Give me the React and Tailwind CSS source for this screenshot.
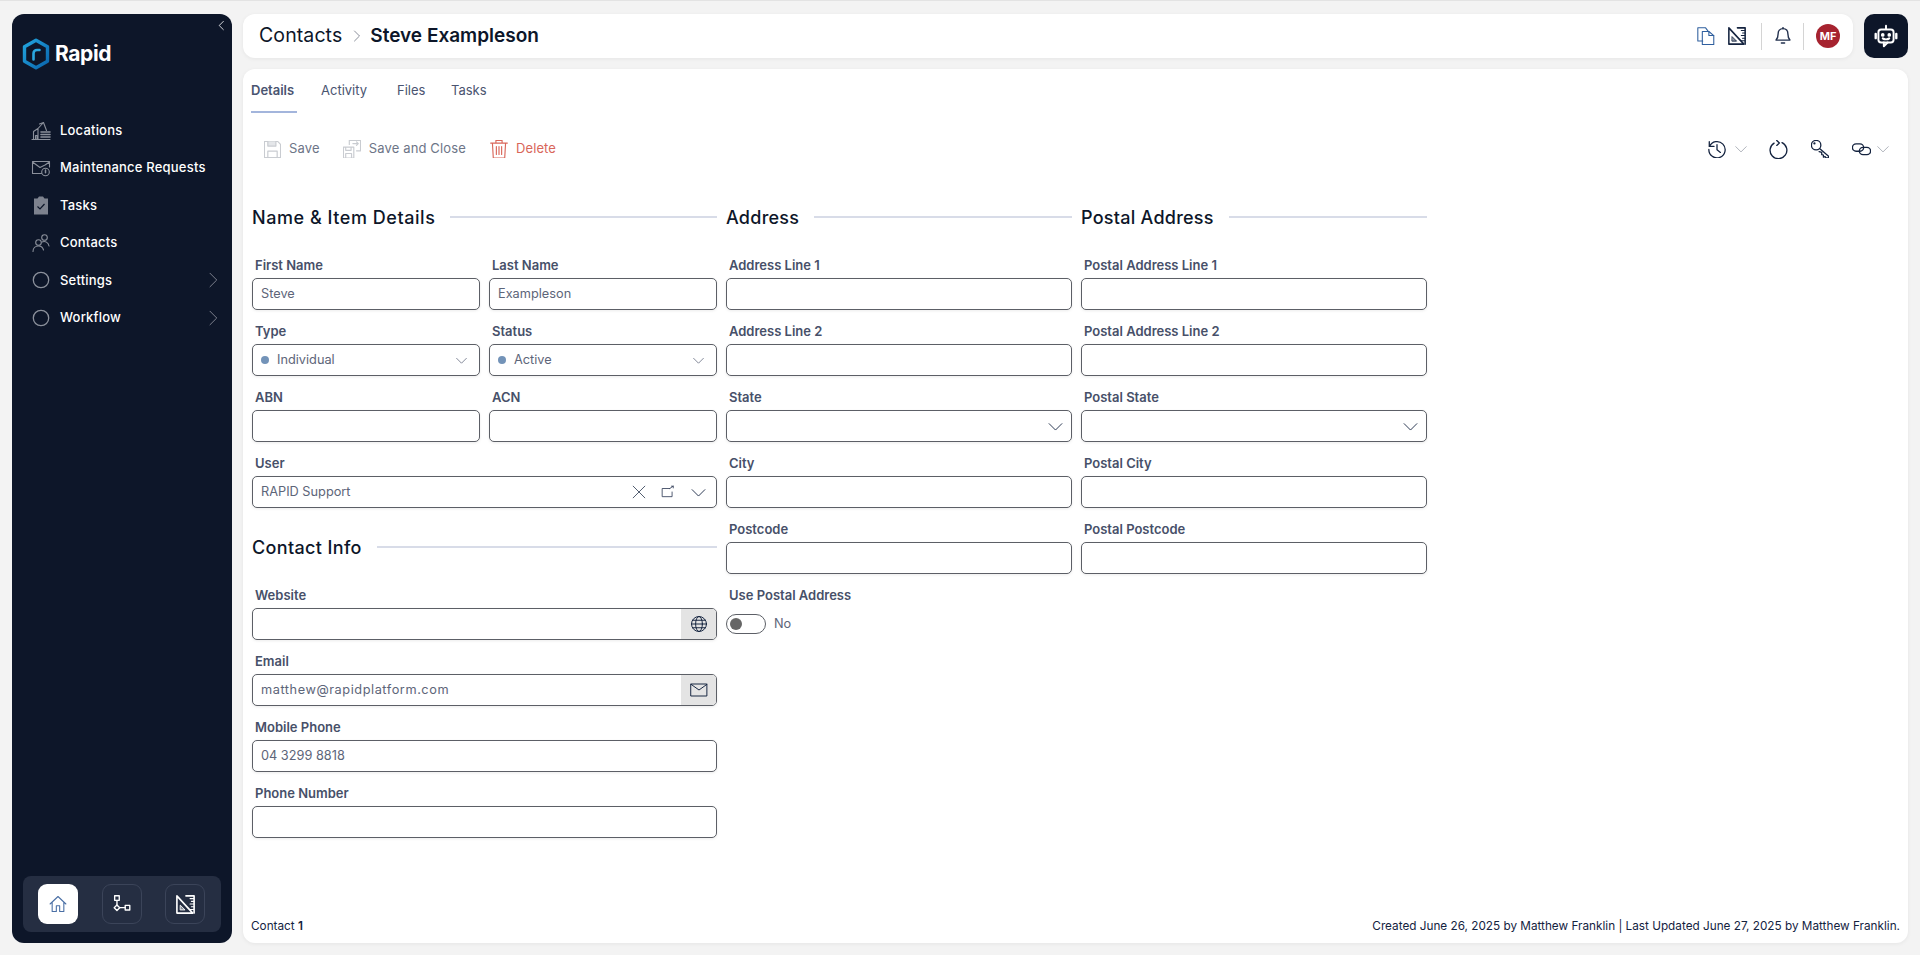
import React from "react";

const S = ({ size = 18, className = "", vb = "0 0 24 24", sw = 1.5, children }) => (
  <svg width={size} height={size} viewBox={vb} fill="none" stroke="currentColor" strokeWidth={sw} strokeLinecap="round" strokeLinejoin="round" className={`shrink-0 ${className}`}>{children}</svg>
);
const ChevD = ({ size = 14, className = "" }) => <S size={size} className={className} sw={1.4}><path d="M3 8l9 9 9-9" /></S>;
const ChevR = ({ className = "" }) => <S size={18} className={className} sw={1.3}><path d="M8 3l9 9-9 9" /></S>;

const SetSquare = ({ size = 20, className = "" }) => (
  <S size={size} className={className} sw={1.8} vb="1.5 1.5 21 21">
    <path d="M2.5 2.5L20 21.5H2.5Z" />
    <path d="M6.5 13L11.5 18H6.5Z" fill="currentColor" fillOpacity=".45" strokeWidth={1} />
    <path d="M12.5 2.5H21.5V21.5" />
    <path d="M17 5.5h4M18.5 8.5h3M17 11.5h4M18.5 14.5h3M17 17.5h4" strokeWidth={1.2} />
  </S>
);

const Logo = () => (
  <svg width="28" height="32" viewBox="0 0 28 32" fill="none">
    <defs>
      <linearGradient id="lg" x1="0" y1="0" x2="1" y2="1">
        <stop offset="0" stopColor="#22a5de" />
        <stop offset="1" stopColor="#0a65ad" />
      </linearGradient>
    </defs>
    <path d="M14 2.2L25.5 8.8V23.2L14 29.8L2.5 23.2V8.8Z" stroke="url(#lg)" strokeWidth="3.4" strokeLinejoin="round" />
    <path d="M11.5 21.5V15.5C11.5 13.5 13 12 15 12H17.5" stroke="#2aa8e0" strokeWidth="2.6" strokeLinecap="round" />
  </svg>
);

const navIcons = {
  building: (
    <S size={20} sw={1.1} vb="0 0 20 20">
      <path d="M1 18.5h18M2.5 18.5V10.5L7 7.5V18.5M4.5 18.5v-4h1.5v4M7 7.5L12.5 1.5 15.5 9.5M12.5 1.5l-4 1.500" />
      <path d="M10 11h9M10 13.5h9M10 16h9" strokeWidth={1.6} />
    </S>
  ),
  mail: (
    <S size={20} sw={1.1} vb="0 0 20 20">
      <path d="M10.5 15.5H1.5V3.5H18.5V9M1.5 4l7.5 5.5L14 7l4.500-3" />
      <circle cx="14.5" cy="14" r="3.8" />
      <path d="M14.5 12v2.8" strokeWidth={1.5} />
    </S>
  ),
  tasks: (
    <svg width="20" height="20" viewBox="0 0 20 20">
      <path d="M3 3.500h3.500L8 1.500h4l1.500 2H17V19.500H3Z" fill="#7d828e" />
      <path d="M6.500 11.500l2.500 2.500 4.500-5" stroke="#0d1629" strokeWidth="1.2" fill="none" />
    </svg>
  ),
  users: (
    <S size={20} sw={1.1} vb="0 0 20 20">
      <circle cx="7.5" cy="9.5" r="2.8" />
      <path d="M2 18.500c0-3.500 2.500-5.500 5.500-5.500s4.500 2 5 4" />
      <circle cx="13.5" cy="4.5" r="2.8" />
      <path d="M11 9c3-1.500 6.500.5 7 4" />
    </S>
  ),
  circle: (
    <svg width="18" height="18" viewBox="0 0 18 18" fill="none"><circle cx="9" cy="9" r="7.7" stroke="#8b909b" strokeWidth="1.3" /></svg>
  ),
};

function NavItem({ icon, label, chevron }) {
  return (
    <div className="h-[37.4px] flex items-center pl-[18.5px] pr-[10px] text-[#ffffff]">
      <span className="w-[20px] flex justify-center text-[#8b909b]">{navIcons[icon]}</span>
      <span className="ml-[9.5px] flex-1 text-[13px] font-medium tracking-[0.2px]">{label}</span>
      {chevron && <ChevR className="text-[#7d828e]" />}
    </div>
  );
}

function Sidebar() {
  return (
    <aside className="w-[220px] shrink-0 bg-[#0d1629] rounded-[12px] flex flex-col relative">
      <span className="absolute right-[5px] top-[6px] text-[#e5e7eb]"><S size={11} sw={2}><path d="M16 3l-9 9 9 9" /></S></span>
      <div className="pl-[10px] pt-[13px] flex items-center gap-[5px] h-[66px]">
        <Logo />
        <span className="text-[21px] font-bold text-white leading-none tracking-[-0.4px]">Rapid</span>
      </div>
      <nav className="mt-[32px] flex flex-col">
        <NavItem icon="building" label="Locations" />
        <NavItem icon="mail" label="Maintenance Requests" />
        <NavItem icon="tasks" label="Tasks" />
        <NavItem icon="users" label="Contacts" />
        <NavItem icon="circle" label="Settings" chevron />
        <NavItem icon="circle" label="Workflow" chevron />
      </nav>
      <div className="mt-auto mx-[11px] mb-[11px] h-[56px] rounded-[8px] bg-[#252e42] flex items-center pl-[15px] gap-[23.5px]">
        <div className="w-[40px] h-[40px] rounded-[9px] bg-white flex items-center justify-center text-[#4a6fa5]">
          <S size={20} sw={1.3}><path d="M2.500 12L12 3l9.500 9M5 10v11h5v-7h4v7h5V10" /></S>
        </div>
        <div className="w-[40px] h-[40px] rounded-[9px] border border-[#3b4459] flex items-center justify-center text-white">
          <S size={22} sw={1.5}>
            <rect x="4" y="3" width="5" height="5" />
            <path d="M6.500 8v5" />
            <path d="M6.500 13l3 3-3 3-3-3Z" />
            <path d="M9.500 16h6" />
            <rect x="15.5" y="13.5" width="5" height="5" />
          </S>
        </div>
        <div className="w-[40px] h-[40px] rounded-[9px] border border-[#3b4459] flex items-center justify-center text-white">
          <SetSquare size={19} />
        </div>
      </div>
    </aside>
  );
}

function Header() {
  return (
    <div className="flex gap-[11px] h-[44px] shrink-0">
      <header className="flex-1 bg-white rounded-[12px] shadow-[0_1px_4px_rgba(0,0,0,0.06)] flex items-center pl-[16px] pr-[13px]">
        <span className="text-[19.5px] text-[#0d1629] tracking-[0.1px]">Contacts</span>
        <span className="ml-[9px] mr-[7px] text-[#7d828e]"><S size={12} sw={1.8}><path d="M7 2l10 10-10 10" /></S></span>
        <span className="text-[19px] font-semibold text-[#0d1629]">Steve Exampleson</span>
        <div className="ml-auto flex items-center">
          <span className="text-[#2f5f9e]">
            <S size={18} sw={1.3} vb="1.5 1 22 22"><path d="M8.500 18H2.500V2H12L15 6" /><path d="M8 6.500h8l6 5V22.500H8Z" /><path d="M16 6.500v5h6" /></S>
          </span>
          <SetSquare size={18} className="ml-[13px] text-[#14233f]" />
          <span className="ml-[15px] w-[1px] h-[27px] bg-[#d4d4d4]" />
          <span className="ml-[11.5px] text-[#22304d]">
            <S size={18} sw={1.7} vb="2 1 20 22"><path d="M12 3c-4 0-6 3-6 6.500 0 4-1 6-2.500 7.500h17c-1.500-1.500-2.500-3.500-2.500-7.500C18 6 16 3 12 3Z" /><path d="M12 1.500V3M10 20.500h4" /></S>
          </span>
          <span className="ml-[11.5px] w-[1px] h-[27px] bg-[#d4d4d4]" />
          <span className="ml-[12px] w-[24px] h-[24px] rounded-full bg-[#a6232f] text-white text-[11px] font-bold flex items-center justify-center">MF</span>
        </div>
      </header>
      <div className="w-[44px] rounded-[10px] bg-[#0d1629] flex items-center justify-center text-white">
        <S size={26} sw={1.8}>
          <path d="M12 2.500v3" />
          <rect x="5" y="6" width="14" height="12" rx="2.5" fill="#0d1629" />
          <path d="M2.500 10v4M21.500 10v4" strokeWidth={2.2} />
          <circle cx="9" cy="11" r=".8" fill="currentColor" />
          <circle cx="15" cy="11" r=".8" fill="currentColor" />
          <path d="M9 14.200c1.500 1.200 4.500 1.200 6 0" />
          <path d="M10 18v3.500l3.500-3.500" />
        </S>
      </div>
    </div>
  );
}

function Tabs() {
  return (
    <div className="h-[44px] flex text-[13px] text-[#4a5470]">
      <div className="w-[46px] h-[44px] flex items-center border-b-2 border-[#a3b5dc] font-semibold pt-[1px]">Details</div>
      <div className="ml-[24px] w-[46px] flex items-center">Activity</div>
      <div className="ml-[30px] w-[27px] flex items-center">Files</div>
      <div className="ml-[27px] flex items-center">Tasks</div>
    </div>
  );
}

function Toolbar() {
  return (
    <div className="h-[70px] flex items-center text-[13px] pl-[13px] pr-[10px] pt-[2px]">
      <span className="text-[#c9ccd1]">
        <S size={17} sw={1.4} vb="2 2 20 20"><path d="M2.500 2.500H18L21.500 6V21.500H2.500Z" /><path d="M6.500 2.500V8H16V2.500" fill="#e4e6e9" /><path d="M6.500 21.500V14H17.500V21.500" /></S>
      </span>
      <span className="ml-[8px] text-[#6d7587] tracking-[0.15px]">Save</span>
      <span className="ml-[23px] text-[#c9ccd1]">
        <S size={18} sw={1.3} vb="2 2 20 20"><path d="M2.500 10H14V22H2.500ZM5 10v3.500h6V10M5 22v-5h6.500v5" /><path d="M9 7V2.500H21.500V14H17M13 6h6M17 4l2 2-2 2" /></S>
      </span>
      <span className="ml-[8px] text-[#6d7587] tracking-[0.15px]">Save and Close</span>
      <span className="ml-[24px] text-[#d9665a]">
        <S size={18} sw={1.3} vb="2 2 20 20.5"><path d="M2.500 5.500h19M8.500 5.500V2.500h7v3M4.500 5.500L5.500 22.500h13l1-17M9 9.500v9M12 9.500v9M15 9.500v9" /></S>
      </span>
      <span className="ml-[8px] text-[#d9665a] tracking-[0.1px]">Delete</span>
      <div className="ml-auto flex items-center text-[#14233f]">
        <S size={18} sw={1.5} vb="1.5 1.5 21 21"><path d="M3 3.500v5.500h5.500" /><path d="M3.300 9A9.500 9.500 0 1 1 2.500 12.500" /><path d="M12 7v6l4 3" /></S>
        <ChevD size={14} className="ml-[8px] text-[#9ea3ad]" />
        <S size={19} sw={1.5} vb="1.5 1 21 21.5" className="ml-[21px]"><path d="M10 1.500l3 2.800-3 2.800" /><path d="M7 4.500a9.500 9.500 0 1 0 9-.5" /></S>
        <S size={18} sw={1.5} vb="1.5 1.5 21 21" className="ml-[23px]"><circle cx="7.5" cy="7.5" r="5.5" /><circle cx="5.5" cy="5.5" r=".6" fill="currentColor" /><path d="M11.500 11.500L22 20.500v2h-3l-1-1.500-2 .5v-2.500l-2-.5v-2.500L11 15" /></S>
        <S size={19} sw={1.5} vb="1 1 22 22" className="ml-[23px]"><rect x="1.5" y="5.5" width="13" height="8.5" rx="4.25" /><rect x="9.5" y="9.5" width="13" height="8.5" rx="4.25" /></S>
        <ChevD size={14} className="ml-[5px] text-[#9ea3ad]" />
      </div>
    </div>
  );
}

function SectionHead({ title, className = "", tracking = "tracking-[0.25px]" }) {
  return (
    <div className={`flex items-center h-[27px] ${className}`}>
      <h2 className={`text-[18px] font-medium text-[#0d1629] whitespace-nowrap ${tracking}`}>{title}</h2>
      <div className="ml-[15px] flex-1 h-[2px] bg-[#d8dce8] -translate-y-[1px]" />
    </div>
  );
}

function Field({ label, value, dot, chevron, end, valueClass = "" }) {
  return (
    <div>
      <div className="h-[20px] pl-[3px] text-[13px] leading-[21px] font-semibold text-[#475069]">{label}</div>
      <div className="mt-[3px] h-[32px] rounded-[5px] border border-[#5c5f66] bg-white shadow-[0_1px_3px_rgba(0,0,0,0.08)] flex items-center overflow-hidden">
        <div className={`flex-1 min-w-0 pl-[8px] flex items-center text-[12.75px] text-[#5d6579] ${valueClass}`}>
          {dot && <span className="w-[8px] h-[8px] rounded-full bg-[#7393b8] mr-[8px] shrink-0" />}
          {value}
        </div>
        {chevron === "small" && <ChevD size={13} className="mr-[11px] text-[#5d6579]" />}
        {chevron === "big" && <ChevD size={17} className="mr-[7px] text-[#2d3a54]" />}
        {end}
      </div>
    </div>
  );
}

function Addon({ children }) {
  return <div className="w-[35px] h-full bg-[#e4e4e4] flex items-center justify-center text-[#14233f]">{children}</div>;
}

function Form() {
  return (
    <div className="mt-[21px] w-[1175px] ml-[1px] grid grid-cols-[465px_346px_346px] gap-x-[9px]">
      <div>
        <SectionHead title="Name & Item Details" tracking="tracking-[0.55px]" />
        <div className="mt-[24px] grid grid-cols-2 gap-x-[9px] gap-y-[11px]">
          <Field label="First Name" value="Steve" />
          <Field label="Last Name" value="Exampleson" />
          <Field label="Type" value="Individual" dot chevron="small" />
          <Field label="Status" value="Active" dot chevron="small" />
          <Field label="ABN" />
          <Field label="ACN" />
          <div className="col-span-2">
            <Field
              label="User"
              value="RAPID Support"
              end={
                <div className="flex items-center text-[#2d3a54] pr-[9px] gap-[15px]">
                  <S size={14} sw={1.3} className="text-[#1c2a44]"><path d="M2 2l20 20M22 2L2 22" /></S>
                  <S size={14} sw={1.4}><path d="M15 6H2v14h17v-8" /><path d="M15 6l6-4M18 2h3v3" /></S>
                  <ChevD size={17} />
                </div>
              }
            />
          </div>
        </div>
        <SectionHead title="Contact Info" className="mt-[26px]" tracking="tracking-[0.35px]" />
        <div className="mt-[24px] flex flex-col gap-y-[11px]">
          <Field label="Website" end={<Addon><S size={18} sw={1.3}><circle cx="12" cy="12" r="10" /><ellipse cx="12" cy="12" rx="4.5" ry="10" /><path d="M2 12h20M3.300 7h17.400M3.300 17h17.400" /></S></Addon>} />
          <Field label="Email" value="matthew@rapidplatform.com" valueClass="tracking-[0.55px]" end={<Addon><S size={18} sw={1.3}><rect x="1.5" y="4" width="21" height="16" /><path d="M1.500 4.500L12 12l10.500-7.500" /></S></Addon>} />
          <Field label="Mobile Phone" value="04 3299 8818" />
          <Field label="Phone Number" />
        </div>
      </div>
      <div>
        <SectionHead title="Address" />
        <div className="mt-[24px] flex flex-col gap-y-[11px]">
          <Field label="Address Line 1" />
          <Field label="Address Line 2" />
          <Field label="State" chevron="big" />
          <Field label="City" />
          <Field label="Postcode" />
          <div>
            <div className="h-[20px] pl-[3px] text-[13px] leading-[21px] font-semibold text-[#475069]">Use Postal Address</div>
            <div className="mt-[9px] flex items-center">
              <div className="w-[40px] h-[20px] rounded-full border border-[#5c5f66] flex items-center pl-[3px]">
                <span className="w-[12px] h-[12px] rounded-full bg-[#666666]" />
              </div>
              <span className="ml-[8px] text-[12.75px] text-[#5d6579]">No</span>
            </div>
          </div>
        </div>
      </div>
      <div>
        <SectionHead title="Postal Address" />
        <div className="mt-[24px] flex flex-col gap-y-[11px]">
          <Field label="Postal Address Line 1" />
          <Field label="Postal Address Line 2" />
          <Field label="Postal State" chevron="big" />
          <Field label="Postal City" />
          <Field label="Postal Postcode" />
        </div>
      </div>
    </div>
  );
}

export default function App() {
  return (
    <div className="h-[955px] w-[1920px] overflow-hidden bg-[#f3f3f3] border-t border-[#e3e3e3] pt-[13px] px-[12px] pb-[12px] flex gap-[11px] [font-family:Inter,'Noto_Sans',sans-serif]">
      <Sidebar />
      <div className="flex-1 min-w-0 flex flex-col gap-[11px]">
        <Header />
        <main className="flex-1 min-h-0 bg-white rounded-[12px] shadow-[0_1px_4px_rgba(0,0,0,0.06)] px-[8px] flex flex-col">
          <Tabs />
          <Toolbar />
          <Form />
          <footer className="mt-auto h-[16px] mb-[8px] flex justify-between items-center text-[11.75px] text-[#14233f]">
            <span>Contact <b className="font-semibold">1</b></span>
            <span>Created June 26, 2025 by Matthew Franklin | Last Updated June 27, 2025 by Matthew Franklin.</span>
          </footer>
        </main>
      </div>
    </div>
  );
}
